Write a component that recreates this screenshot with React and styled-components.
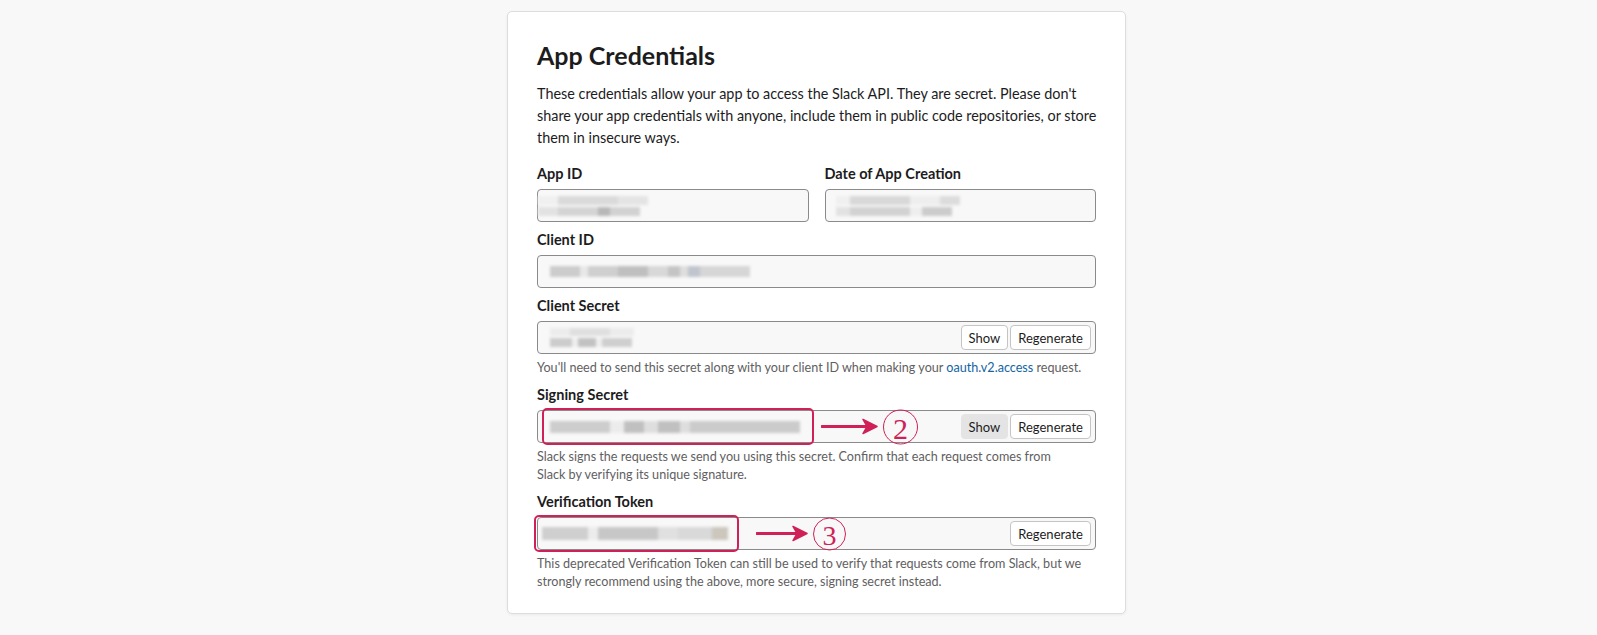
import React from 'react';
import styled, { createGlobalStyle } from 'styled-components';

const GlobalStyle = createGlobalStyle`
  html, body {
    margin: 0;
    padding: 0;
    background: #f8f8f8;
  }
  body {
    font-family: Lato, "Open Sans", "Liberation Sans", sans-serif;
    color: #1d1c1d;
  }
`;

const accent = '#cf2157';

const Page = styled.div`
  min-height: 635px;
  padding: 11px 0 0 507px;
  box-sizing: border-box;
`;

const Card = styled.section`
  width: 619px;
  box-sizing: border-box;
  background: #fff;
  border: 1px solid #dddddd;
  border-radius: 5px;
  box-shadow: 0 1px 3px rgba(0, 0, 0, 0.06);
  padding: 27px 29px 22px;
`;

const Title = styled.h2`
  margin: 0 0 12px;
  font-size: 25px;
  line-height: 32px;
  font-weight: 700;
  color: #1d1c1d;
`;

const Intro = styled.p`
  margin: 0 0 15px;
  font-size: 14.4px;
  line-height: 22px;
  color: #1d1c1d;
  white-space: nowrap;
`;

const Row = styled.div`
  display: grid;
  grid-template-columns: 1fr 1fr;
  gap: 16px;
`;

const Field = styled.div`
  margin-bottom: 8px;

  &:last-child {
    margin-bottom: 0;
  }
`;

const Label = styled.div`
  font-size: 14.5px;
  line-height: 20px;
  font-weight: 700;
  margin-bottom: 5px;
`;

const InputBox = styled.div`
  position: relative;
  display: flex;
  align-items: center;
  height: 33px;
  box-sizing: border-box;
  border: 1px solid #8a8a8a;
  border-radius: 4px;
  background: #f8f8f8;
  padding: 0 4px 0 12px;
`;

const Smudge = styled.div`
  display: flex;
  flex-direction: column;
  gap: 2px;
  margin-left: ${p => p.$offset || 0}px;
  filter: blur(1.8px);
`;

const SmudgeLine = styled.div`
  display: flex;
  height: ${p => p.$h || 8}px;
`;

const Piece = styled.span`
  display: block;
  width: ${p => p.$w}px;
  background: ${p => p.$c};
`;

const Actions = styled.div`
  margin-left: auto;
  display: flex;
  gap: 2px;
`;

const Button = styled.button`
  height: 25px;
  padding: 0 7px;
  border: 1px solid ${p => (p.$pressed ? '#e4e4e4' : '#c4c4c4')};
  border-radius: 4px;
  background: ${p => (p.$pressed ? '#e4e4e4' : '#fff')};
  font-family: Lato, "Liberation Sans", sans-serif;
  font-size: 13px;
  color: #1d1c1d;
  cursor: pointer;
`;

const Help = styled.p`
  margin: 5px 0 0;
  font-size: 12.6px;
  line-height: 18px;
  color: #616061;
  white-space: nowrap;
`;

const Link = styled.a`
  color: #1264a3;
  text-decoration: none;
`;

const Highlight = styled.div`
  position: absolute;
  left: ${p => p.$left}px;
  top: -3px;
  width: ${p => p.$width}px;
  height: 37px;
  box-sizing: border-box;
  border: 2px solid ${accent};
  border-radius: 5px;
  pointer-events: none;
`;

const Callout = styled.div`
  position: absolute;
  left: ${p => p.$left}px;
  top: 50%;
  transform: translateY(-50%);
  display: flex;
  align-items: center;
  gap: 5px;
  pointer-events: none;
`;

const Circled = styled.span`
  display: flex;
  align-items: center;
  justify-content: center;
  width: ${p => p.$size}px;
  height: ${p => p.$size}px;
  box-sizing: border-box;
  border: 1.5px solid ${accent};
  border-radius: 50%;
  color: ${accent};
  font-family: "Liberation Serif", "DejaVu Serif", serif;
  font-size: ${p => p.$size - 5}px;
  line-height: 1;
  padding-top: 3px;
`;

const Arrow = ({ width = 56 }) => (
  <svg width={width} height="18" viewBox={`0 0 ${width} 18`}>
    <line x1="1" y1="9" x2={width - 10} y2="9" stroke={accent} strokeWidth="3.2" strokeLinecap="round" />
    <path d={`M${width - 15} 2 L${width - 1} 9 L${width - 15} 16 L${width - 11} 9 Z`} fill={accent} stroke={accent} strokeWidth="1.5" strokeLinejoin="round" />
  </svg>
);

const Blur = ({ lines, offset }) => (
  <Smudge $offset={offset}>
    {lines.map((line, i) => (
      <SmudgeLine key={i} $h={line.h}>
        {line.parts.map(([w, c], j) => (
          <Piece key={j} $w={w} $c={c} />
        ))}
      </SmudgeLine>
    ))}
  </Smudge>
);

const appIdBlur = [
  { h: 9, parts: [[20, '#f0f0f0'], [60, '#dadada'], [30, '#e4e4e4']] },
  { h: 9, parts: [[20, '#e2e2e2'], [40, '#d4d4d4'], [12, '#b8b8b8'], [30, '#d2d2d2']] },
];

const dateBlur = [
  { h: 9, parts: [[14, '#f0f0f0'], [60, '#d8d8d8'], [30, '#eeeeee'], [20, '#dcdcdc']] },
  { h: 9, parts: [[14, '#e2e2e2'], [60, '#d2d2d2'], [12, '#eeeeee'], [30, '#cccccc']] },
];

const clientIdBlur = [
  { h: 11, parts: [[30, '#cccccc'], [8, '#e8e8e8'], [30, '#cfcfcf'], [30, '#bfbfbf'], [20, '#d8d8d8'], [12, '#c4c4c4'], [8, '#dedede'], [12, '#c0c4cd'], [50, '#d6d6d6']] },
];

const clientSecretBlur = [
  { h: 8, parts: [[20, '#ececec'], [40, '#dfdfdf'], [24, '#ececec']] },
  { h: 9, parts: [[22, '#cccccc'], [6, '#eeeeee'], [18, '#c2c2c2'], [6, '#eeeeee'], [30, '#cfcfcf']] },
];

const signingBlur = [
  { h: 12, parts: [[60, '#cdcdcd'], [14, '#ececec'], [20, '#c0c0c0'], [14, '#dedede'], [22, '#c0c0c0'], [10, '#dedede'], [110, '#cbcbcb']] },
];

const tokenBlur = [
  { h: 13, parts: [[46, '#cfcfcf'], [10, '#ececec'], [60, '#c7c7c7'], [20, '#e0e0e0'], [34, '#d9d9d9'], [16, '#ccc6bd']] },
];

export default function App() {
  return (
    <Page>
      <GlobalStyle />
      <Card>
        <Title>App Credentials</Title>
        <Intro>
          These credentials allow your app to access the Slack API. They are secret. Please don't
          <br />
          share your app credentials with anyone, include them in public code repositories, or store
          <br />
          them in insecure ways.
        </Intro>

        <Row>
          <Field>
            <Label>App ID</Label>
            <InputBox>
              <Blur lines={appIdBlur} offset={-12} />
            </InputBox>
          </Field>
          <Field>
            <Label>Date of App Creation</Label>
            <InputBox>
              <Blur lines={dateBlur} offset={-2} />
            </InputBox>
          </Field>
        </Row>

        <Field>
          <Label>Client ID</Label>
          <InputBox>
            <Blur lines={clientIdBlur} />
          </InputBox>
        </Field>

        <Field>
          <Label>Client Secret</Label>
          <InputBox>
            <Blur lines={clientSecretBlur} />
            <Actions>
              <Button>Show</Button>
              <Button>Regenerate</Button>
            </Actions>
          </InputBox>
          <Help>
            You'll need to send this secret along with your client ID when making your{' '}
            <Link href="#">oauth.v2.access</Link> request.
          </Help>
        </Field>

        <Field>
          <Label>Signing Secret</Label>
          <InputBox>
            <Blur lines={signingBlur} />
            <Actions>
              <Button $pressed>Show</Button>
              <Button>Regenerate</Button>
            </Actions>
            <Highlight $left={4} $width={272} />
            <Callout $left={283}>
              <Arrow width={57} />
              <Circled $size={35}>2</Circled>
            </Callout>
          </InputBox>
          <Help>
            Slack signs the requests we send you using this secret. Confirm that each request comes from
            <br />
            Slack by verifying its unique signature.
          </Help>
        </Field>

        <Field>
          <Label>Verification Token</Label>
          <InputBox>
            <Blur lines={tokenBlur} offset={-8} />
            <Actions>
              <Button>Regenerate</Button>
            </Actions>
            <Highlight $left={-4} $width={205} />
            <Callout $left={218}>
              <Arrow width={52} />
              <Circled $size={33}>3</Circled>
            </Callout>
          </InputBox>
          <Help>
            This deprecated Verification Token can still be used to verify that requests come from Slack, but we
            <br />
            strongly recommend using the above, more secure, signing secret instead.
          </Help>
        </Field>
      </Card>
    </Page>
  );
}
